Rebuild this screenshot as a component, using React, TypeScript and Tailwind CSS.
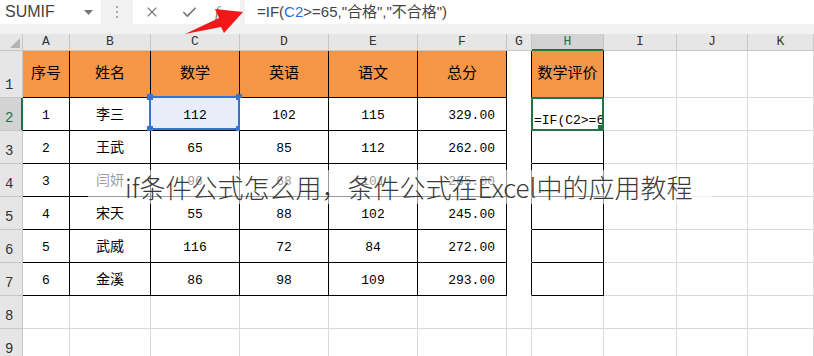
import { X, Check } from 'lucide-react'

const cols = ['A', 'B', 'C', 'D', 'E', 'F', 'G', 'H', 'I', 'J', 'K']

const heads = ['序号', '姓名', '数学', '英语', '语文', '总分']

const data = [
  ['1', '李三', '112', '102', '115', '329.00'],
  ['2', '王武', '65', '85', '112', '262.00'],
  ['3', '闫妍', '96', '68', '101', '265.00'],
  ['4', '宋天', '55', '88', '102', '245.00'],
  ['5', '武威', '116', '72', '84', '272.00'],
  ['6', '金溪', '86', '98', '109', '293.00'],
]

const cellFont = "font-['Liberation_Mono','Noto_Sans_CJK_SC',monospace]"

const BodyCell = ({ r, c }: { r: number; c: number }) => {
  const inTable = r <= 7 && c <= 5
  const isH = r <= 7 && c === 7
  const isG = r <= 7 && c === 6

  let border = 'border-r border-b border-[#d9d9d9]'
  if (inTable || isH) border = 'border-r border-b border-black'
  if (isG) border = 'border-r border-b border-r-black border-b-white'

  const bg = r === 1 && (inTable || isH) ? 'bg-[#f79646]' : r === 2 && c === 2 ? 'bg-[#e8eef9]' : 'bg-white'

  let content: React.ReactNode = null
  if (r === 1 && inTable) {
    content = <span className="pt-[3px] text-[15px]">{heads[c]}</span>
  } else if (r === 1 && isH) {
    content = <span className="pt-[3px] text-[15px]">数学评价</span>
  } else if (r >= 2 && inTable) {
    const v = data[r - 2][c]
    content = <span className={`pt-[3px] ${c === 1 ? 'text-[14px]' : 'text-[13px]'}`}>{v}</span>
  }

  const align = c === 5 && r >= 2 ? 'justify-end pr-[11px]' : 'justify-center'

  return (
    <div className={`relative flex items-center ${align} ${border} ${bg} text-black ${cellFont}`}>
      {content}
      {r === 2 && c === 2 && (
        <div className="pointer-events-none absolute -left-[2px] -top-[2px] h-[34px] w-[91px] border-2 border-[#3a73cc]">
          <div className="absolute -left-[4px] -top-[4px] h-[6px] w-[6px] bg-[#3a73cc]" />
          <div className="absolute -right-[4px] -top-[4px] h-[6px] w-[6px] bg-[#3a73cc]" />
          <div className="absolute -bottom-[4px] -left-[4px] h-[6px] w-[6px] bg-[#3a73cc]" />
          <div className="absolute -bottom-[4px] -right-[4px] h-[6px] w-[6px] bg-[#3a73cc]" />
        </div>
      )}
      {r === 2 && c === 7 && (
        <div className="absolute -left-[1px] -top-[1px] flex h-[34px] w-[73px] items-end overflow-hidden border-2 border-[#217346] pb-[2px] pl-[1px]">
          <span className="whitespace-nowrap text-[13px] leading-none">=IF(C2&gt;=65,"合格","不合格")</span>
          <div className="absolute -bottom-[1px] -right-[1px] h-[5px] w-[5px] bg-[#217346]" />
        </div>
      )}
    </div>
  )
}

export default function App() {
  const bodyRows = [1, 2, 3, 4, 5, 6, 7, 8, 9]

  return (
    <div className="relative h-[356px] w-[814px] overflow-hidden bg-white">
      {/* formula bar */}
      <div className="flex h-[34px] bg-[#f1f1f1] font-['Liberation_Sans','Noto_Sans_CJK_SC',sans-serif] text-[#444]">
        <div className="flex h-[24px] w-[101px] items-center justify-between bg-white pl-[5px] pr-[8px] text-[16px]">
          <span>SUMIF</span>
          <svg width="9" height="5" viewBox="0 0 9 5">
            <polygon points="0,0 9,0 4.5,5" fill="#777" />
          </svg>
        </div>
        <div className="flex h-[24px] w-[32px] items-center justify-center">
          <svg width="3" height="12" viewBox="0 0 3 12">
            <rect x="0" y="0" width="2" height="2" fill="#aaa" />
            <rect x="0" y="5" width="2" height="2" fill="#aaa" />
            <rect x="0" y="10" width="2" height="2" fill="#aaa" />
          </svg>
        </div>
        <div className="flex h-[24px] w-[107px] items-center bg-white pl-[11px] text-[#7a7a7a]">
          <X size={16} strokeWidth={1.6} />
          <Check size={17} strokeWidth={2.4} className="ml-[21px]" />
          <span className="ml-[17px] font-['Liberation_Serif',serif] text-[15px] italic">
            f<span className="text-[11px]">x</span>
          </span>
        </div>
        <div className="ml-[5px] flex h-[24px] flex-1 items-center bg-white pl-[12px] text-[15px]">
          <span>=IF(</span>
          <span className="text-[#2f6fce]">C2</span>
          <span>&gt;=65,"合格","不合格")</span>
        </div>
      </div>

      {/* sheet grid */}
      <div className="grid grid-cols-[23px_47px_81px_89px_89px_89px_89px_25px_72px_73px_71px_1fr] grid-rows-[17px_47px_repeat(8,33px)]">
        <div className="relative border-b border-r border-[#c6c6c6] bg-[#e6e6e6]">
          <svg className="absolute bottom-[2px] right-[2px]" width="10" height="10" viewBox="0 0 10 10">
            <polygon points="10,0 10,10 0,10" fill="#b5b5b5" />
          </svg>
        </div>
        {cols.map((col) => (
          <div
            key={col}
            className={`flex items-center justify-center border-r font-['Liberation_Mono',monospace] text-[13px] ${
              col === 'H'
                ? 'border-b-2 border-b-[#217346] border-r-[#c6c6c6] bg-[#d3d3d3] text-[#217346]'
                : 'border-b border-[#c6c6c6] bg-[#e6e6e6] text-[#333]'
            }`}
          >
            {col}
          </div>
        ))}

        {bodyRows.map((r) => (
          <div key={r} className="contents">
            <div
              className={`flex items-end pb-[1px] pl-[5px] font-['Liberation_Mono',monospace] text-[14px] ${
                r === 2
                  ? 'border-b border-r-2 border-b-[#c6c6c6] border-r-[#217346] bg-[#d3d3d3] text-[#217346]'
                  : 'border-b border-r border-[#c6c6c6] bg-[#e6e6e6] text-[#333]'
              }`}
            >
              {r}
            </div>
            {cols.map((col, c) => (
              <BodyCell key={col} r={r} c={c} />
            ))}
          </div>
        ))}
      </div>

      {/* red arrow */}
      <svg className="pointer-events-none absolute left-0 top-0" width="260" height="40" viewBox="0 0 260 40">
        <polygon points="185,34 219,18 215,9 243,12 224,33 221,27" fill="#f01818" />
      </svg>

      {/* title band */}
      <div className="absolute left-[88px] top-[170px] flex h-[34px] w-[624px] items-center bg-white/60 pl-[37px] font-['Noto_Sans_CJK_SC',sans-serif] text-[26px] font-light leading-none text-[#3a3a3a]">
        if条件公式怎么用，条件公式在Excel中的应用教程
      </div>
    </div>
  )
}
